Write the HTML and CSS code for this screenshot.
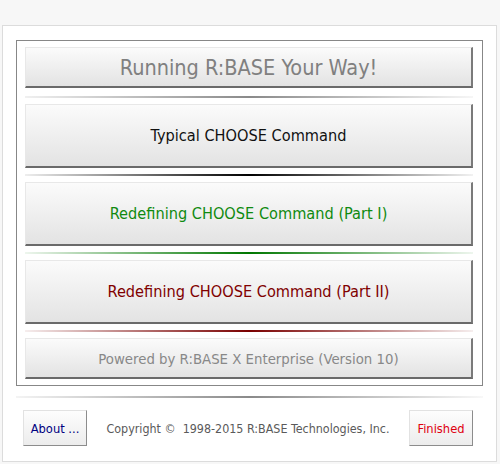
FILE: index.html
```html
<!DOCTYPE html>
<html>
<head>
<meta charset="utf-8">
<link rel="stylesheet" href="styles.css">
</head>
<body>
<div class="panel">
  <div class="box">
    <div class="btn btn-title">Running R:BASE Your Way!</div>
    <div class="sep sep-gray"></div>
    <div class="btn btn-big t-black">Typical CHOOSE Command</div>
    <div class="sep sep-black"></div>
    <div class="btn btn-big t-green">Redefining CHOOSE Command (Part I)</div>
    <div class="sep sep-green"></div>
    <div class="btn btn-big t-red">Redefining CHOOSE Command (Part II)</div>
    <div class="sep sep-red"></div>
    <div class="btn btn-powered">Powered by R:BASE X Enterprise (Version 10)</div>
  </div>
  <div class="sep sep-foot"></div>
  <div class="footer">
    <div class="small-btn about">About ...</div>
    <div class="copy">Copyright ©&nbsp; 1998-2015 R:BASE Technologies, Inc.</div>
    <div class="small-btn finished">Finished</div>
  </div>
</div>
</body>
</html>
```
FILE: styles.css
```css
html, body {
  margin: 0;
  padding: 0;
  background: #f7f7f7;
  font-family: "DejaVu Sans Condensed", "DejaVu Sans", sans-serif;
}
.panel {
  margin: 25px 3px 0 2px;
  height: 437px;
  box-sizing: border-box;
  border: 1px solid #dcdcdc;
  background: #ffffff;
  padding: 14px 13px 0 13px;
}
.box {
  border: 1px solid #878787;
  padding: 6px 9px 6px 8px;
  display: flex;
  flex-direction: column;
}
.btn {
  box-sizing: border-box;
  display: flex;
  align-items: center;
  justify-content: center;
  background: linear-gradient(#fbfbfb, #e3e3e3);
  border-top: 1px solid #e8e8e8;
  border-left: 1px solid #e8e8e8;
  border-right: 2px solid #7a7a7a;
  border-bottom: 2px solid #6a6a6a;
  white-space: nowrap;
}
.btn-title {
  height: 41px;
  font-size: 21.5px;
  color: #808080;
}
.btn-big {
  height: 64px;
  font-size: 16.2px;
}
.btn-powered {
  height: 41px;
  font-size: 14.8px;
  color: #888888;
}
.t-black { color: #111111; }
.t-green { color: #108a10; }
.t-red { color: #800000; }
.sep {
  height: 2px;
  margin: 6px 0 6px;
}
.sep-gray { background: linear-gradient(to right, #f0f0f0, #8a8a8a 50%, #f6f6f6); margin-top: 8px; }
.sep-black { background: linear-gradient(to right, #eeeeee, #000000 50%, #f2f2f2); }
.sep-green { background: linear-gradient(to right, #eef6ee, #007700 50%, #eef6ee); }
.sep-red { background: linear-gradient(to right, #f6eeee, #7a0000 50%, #f6eeee); }
.sep-foot {
  background: linear-gradient(to right, #f4f4f4, #8a8a8a 50%, #f8f8f8);
  margin: 10px 0 0;
}
.footer {
  display: flex;
  align-items: center;
  margin-top: 12px;
  padding: 0 10px 0 7px;
}
.small-btn {
  box-sizing: border-box;
  width: 64px;
  height: 36px;
  display: flex;
  align-items: center;
  justify-content: center;
  font-size: 12.8px;
  background: linear-gradient(#fdfdfd, #ececec);
  border-top: 1px solid #e2e2e2;
  border-left: 1px solid #e2e2e2;
  border-right: 1px solid #8c8c8c;
  border-bottom: 1px solid #8c8c8c;
}
.about { color: #000080; }
.finished { color: #e00010; }
.copy {
  flex: 1;
  text-align: center;
  font-size: 12.4px;
  color: #5a5a5a;
}
```
